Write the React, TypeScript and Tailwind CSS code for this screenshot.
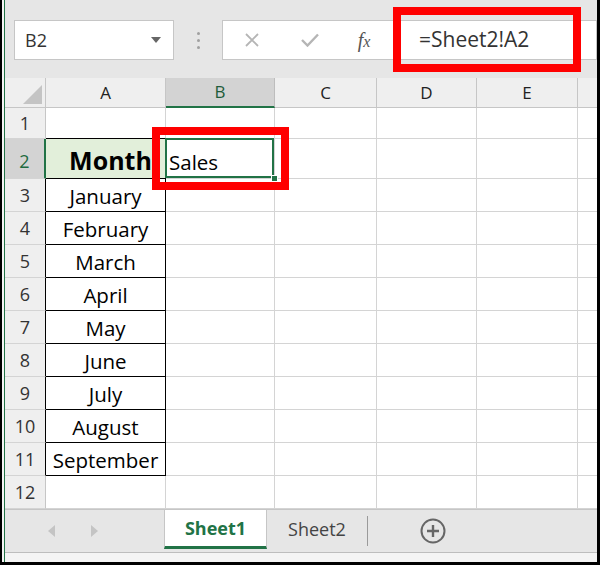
import React from 'react';

const cols = [
  { key: 'A', w: 'w-[120px]' },
  { key: 'B', w: 'w-[109px]' },
  { key: 'C', w: 'w-[102px]' },
  { key: 'D', w: 'w-[100px]' },
  { key: 'E', w: 'w-[101px]' },
];

const months = ['January', 'February', 'March', 'April', 'May', 'June', 'July', 'August', 'September'];

const rows = [
  { n: 1, h: 'h-[31px]' },
  { n: 2, h: 'h-[40px]' },
  ...Array.from({ length: 10 }, (_, i) => ({ n: i + 3, h: 'h-[33px]' })),
];

function RowHeader({ n, h }: { n: number; h: string }) {
  const sel = n === 2;
  const table = n >= 2 && n <= 11;
  return (
    <div
      className={`${h} w-[41px] shrink-0 flex items-center justify-center text-[18px] border-b border-b-[#d4d4d4] ${
        sel
          ? 'bg-[#d3d3d3] text-[#1e6b40] border-r-2 border-r-[#217346] pt-[6px]'
          : `bg-[#efefef] text-[#333] border-r ${table ? 'border-r-black' : 'border-r-[#c6c6c6]'}`
      }`}
    >
      {n}
    </div>
  );
}

function Cell({ row, col, w }: { row: number; col: string; w: string }) {
  if (col === 'A') {
    const table = row >= 2 && row <= 11;
    const month = row === 2 ? 'Month' : row >= 3 && row <= 11 ? months[row - 3] : '';
    return (
      <div
        className={`${w} shrink-0 flex items-center justify-center border-r border-b ${
          table || row === 1 ? 'border-b-black' : 'border-b-[#d4d4d4]'
        } ${table ? 'border-r-black' : 'border-r-[#d4d4d4]'} ${
          row === 2 ? 'bg-[#e2efda] font-bold text-[25px] pt-[4px] pl-[10px]' : 'bg-white text-[20.5px] pt-[2px]'
        } text-black`}
      >
        {month}
      </div>
    );
  }
  if (col === 'B' && row === 2) {
    return (
      <div className={`${w} shrink-0 relative bg-white border-r border-b border-[#d4d4d4]`}>
        <div className="absolute -left-px -top-px right-0 bottom-0 border-2 border-[#217346] flex items-center pl-[2px] pt-[9px] text-[20.5px] text-black">
          Sales
        </div>
        <div className="absolute right-[-4px] bottom-[-4px] w-[7px] h-[7px] bg-[#217346] border border-white" />
      </div>
    );
  }
  return <div className={`${w} shrink-0 bg-white border-r border-b border-[#d4d4d4]`} />;
}

export default function App() {
  return (
    <div className="w-[600px] h-[565px] bg-white border-l-2 border-r-[3px] border-b-[3px] border-black flex overflow-hidden relative font-['Open_Sans',sans-serif]">
      <div className="w-[2px] shrink-0 bg-[#f4f4f4]" />
      <div className="flex-1 border-l border-[#217346] flex flex-col bg-[#e6e6e6] min-w-0">
        {/* Formula bar */}
        <div className="h-[78px] shrink-0 flex items-center pl-[9px] pt-[2px]">
          <div className="w-[160px] h-[40px] bg-white border border-[#c6c6c6] flex items-center justify-between pl-[10px] pr-[12px]">
            <span className="text-[18px] text-[#333]">B2</span>
            <svg width="10" height="6" viewBox="0 0 10 6">
              <path d="M0 0 L10 0 L5 6 Z" fill="#666" />
            </svg>
          </div>
          <div className="w-[48px] flex flex-col items-center gap-[4px]">
            <span className="w-[3px] h-[3px] rounded-full bg-[#a0a0a0]" />
            <span className="w-[3px] h-[3px] rounded-full bg-[#a0a0a0]" />
            <span className="w-[3px] h-[3px] rounded-full bg-[#a0a0a0]" />
          </div>
          <div className="flex-1 h-[40px] bg-white border border-[#c6c6c6] flex items-center">
            <div className="w-[58px] flex justify-center">
              <svg width="16" height="16" viewBox="0 0 16 16">
                <path d="M2 2 L14 14 M14 2 L2 14" stroke="#b5b5b5" strokeWidth="1.8" />
              </svg>
            </div>
            <div className="w-[58px] flex justify-center">
              <svg width="18" height="14" viewBox="0 0 18 14">
                <path d="M1 7 L6.5 12.5 L17 1.5" stroke="#b5b5b5" strokeWidth="2.4" fill="none" />
              </svg>
            </div>
            <div className="w-[50px] flex justify-center">
              <span className="font-['Liberation_Serif',serif] italic text-[20px] text-[#555] leading-none">
                f<span className="text-[16px]">x</span>
              </span>
            </div>
            <span className="ml-[30px] text-[21px] text-[#333]">=Sheet2!A2</span>
          </div>
        </div>

        {/* Grid */}
        <div className="flex flex-col bg-white">
          <div className="flex h-[30px]">
            <div className="w-[41px] shrink-0 bg-[#efefef] border-r border-b border-[#c6c6c6] flex items-end justify-end p-[3px]">
              <svg width="19" height="19" viewBox="0 0 19 19">
                <path d="M19 0 L19 19 L0 19 Z" fill="#c4c4c4" />
              </svg>
            </div>
            {cols.map((c) => (
              <div
                key={c.key}
                className={`${c.w} shrink-0 flex items-center justify-center text-[17px] ${
                  c.key === 'B'
                    ? 'bg-[#d3d3d3] text-[#1e5c3a] border-r border-r-[#bdbdbd] border-b-2 border-b-[#217346]'
                    : 'bg-[#efefef] text-[#222] border-r border-b border-[#c6c6c6]'
                }`}
              >
                {c.key}
              </div>
            ))}
            <div className="flex-1 bg-[#efefef] border-b border-[#c6c6c6]" />
          </div>
          {rows.map((r) => (
            <div key={r.n} className={`flex ${r.h}`}>
              <RowHeader n={r.n} h={r.h} />
              {cols.map((c) => (
                <Cell key={c.key} row={r.n} col={c.key} w={c.w} />
              ))}
              <div className="flex-1 bg-white border-b border-[#d4d4d4]" />
            </div>
          ))}
        </div>

        {/* Sheet tabs */}
        <div className="h-[43px] shrink-0 flex items-stretch border-t border-[#c6c6c6] bg-[#e6e6e6]">
          <div className="w-[159px] flex items-center pl-[43px] gap-[36px]">
            <svg width="7" height="12" viewBox="0 0 7 12">
              <path d="M7 0 L0 6 L7 12 Z" fill="#c4c4c4" />
            </svg>
            <svg width="7" height="12" viewBox="0 0 7 12">
              <path d="M0 0 L7 6 L0 12 Z" fill="#c4c4c4" />
            </svg>
          </div>
          <div className="w-[103px] h-[39px] bg-white border-x border-[#c6c6c6] border-b-[3px] border-b-[#217346] flex items-center justify-center text-[18px] font-bold text-[#217346]">
            Sheet1
          </div>
          <div className="w-[100px] h-[39px] flex items-center justify-center text-[18px] text-[#444]">
            Sheet2
          </div>
          <div className="flex items-center">
            <div className="w-px h-[30px] bg-[#9a9a9a]" />
          </div>
          <div className="w-[130px] flex items-center justify-center">
            <svg width="26" height="26" viewBox="0 0 26 26">
              <circle cx="13" cy="13" r="11.5" fill="none" stroke="#666" strokeWidth="2" />
              <path d="M13 7 L13 19 M7 13 L19 13" stroke="#666" strokeWidth="2.4" />
            </svg>
          </div>
        </div>
        <div className="h-[10px] shrink-0 border-t border-[#bdbdbd] bg-[#f4f4f4]" />
      </div>

      {/* Red highlight boxes */}
      <div className="absolute left-[391px] top-[7px] w-[188px] h-[65px] border-[8px] border-[#ff0000]" />
      <div className="absolute left-[150px] top-[127px] w-[137px] h-[63px] border-[8px] border-[#ff0000]" />
    </div>
  );
}
